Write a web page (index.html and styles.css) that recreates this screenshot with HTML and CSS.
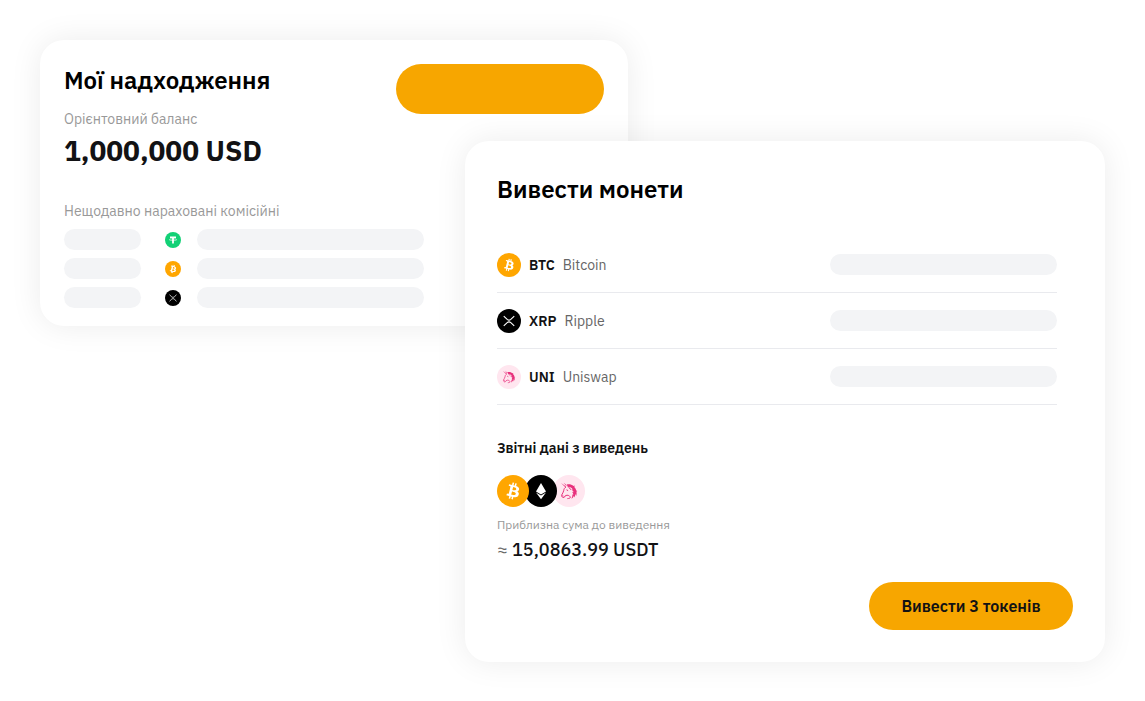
FILE: index.html
```html
<!DOCTYPE html>
<html lang="uk">
<head>
    <meta charset="UTF-8">
    <meta name="viewport" content="width=device-width, initial-scale=1.0">
    <title>Мої надходження</title>
    <link rel="stylesheet" href="styles.css">
</head>
<body>
    <!-- Coin icons -->
    <svg class="sprite" aria-hidden="true">
        <symbol id="btc" viewBox="0 0 32 32">
            <circle cx="16" cy="16" r="16" fill="#ffa600"/>
            <path transform="translate(2.4 2.4) scale(.85)" fill="#fff" d="M23.189 14.02c.314-2.096-1.283-3.223-3.465-3.975l.708-2.84-1.728-.43-.69 2.765c-.454-.114-.92-.22-1.385-.326l.695-2.783L15.596 6l-.708 2.839c-.376-.086-.746-.17-1.104-.26l.002-.009-2.384-.595-.46 1.846s1.283.294 1.256.312c.7.175.826.638.805 1.006l-.806 3.235c.048.012.11.03.18.057l-.183-.045-1.13 4.532c-.086.212-.303.531-.793.41.018.025-1.256-.313-1.256-.313l-.858 1.978 2.25.561c.418.105.828.215 1.231.318l-.715 2.872 1.727.43.708-2.84c.472.127.93.245 1.378.357l-.706 2.828 1.728.43.715-2.866c2.948.558 5.164.333 6.097-2.333.752-2.146-.037-3.385-1.588-4.192 1.13-.26 1.98-1.003 2.207-2.538zm-3.95 5.538c-.533 2.147-4.148.986-5.32.695l.95-3.805c1.172.293 4.929.872 4.37 3.11zm.535-5.569c-.487 1.953-3.495.96-4.47.717l.86-3.45c.975.243 4.118.696 3.61 2.733z"/>
        </symbol>
        <symbol id="xrp" viewBox="0 0 32 32">
            <circle cx="16" cy="16" r="16"/>
            <path fill="none" stroke="#fff" stroke-width="1.5" d="M9 9.500l4.600 4.400q2.400 2 4.800 0L23 9.500M9 22.500l4.600-4.400q2.400-2 4.800 0l4.600 4.400"/>
        </symbol>
        <symbol id="usdt" viewBox="0 0 32 32">
            <circle cx="16" cy="16" r="16" fill="#12d176"/>
            <path fill="#fff" d="M10 9h12v3.400h-4.200V23h-3.600V12.400H10z"/>
            <ellipse cx="16" cy="15.500" rx="7.500" ry="1.600" fill="none" stroke="#fff"/>
        </symbol>
        <symbol id="eth" viewBox="0 0 32 32">
            <circle cx="16" cy="16" r="16"/>
            <path fill="#fff" d="M16 8l5 8.400-5 3-5-3zM11 17.600l5 3 5-3-5 6.600z"/>
        </symbol>
        <symbol id="uni" viewBox="0 0 32 32">
            <circle cx="16" cy="16" r="16" fill="#ffe6ef"/>
            <!-- horn, ear and mane -->
            <path fill="#e8307c" d="M8 8l5 3.400-.7.900zM10.800 7.800l3 2.400-.8.500zM13.800 9.400c2.800-.4 5.200.2 6.700 1.700l1.300-.5-.5 1.300c1.200 1.200 1.700 2.300 1.900 3.700l1.100.3-.9.800c.4 1.600.2 3-.2 4.300l-.8-2.200c0 1.500-.4 2.600-1.200 3.600l-.3-1.700c-.5 1.300-1.300 2.300-2.600 2.900.9-1.500 1.300-2.900 1-4.300l1 .7c0-1.300-.4-2.300-1.200-3.200l1.600.4c-.7-1.300-1.500-2-2.600-2.600l1.700-.1c-1.200-1.500-2.600-2.500-4.500-2.900l-.3.9z"/>
            <!-- face and neck -->
            <path fill="none" stroke="#e8307c" d="M13 12c-1.500.9-2.200 2-2.300 3.800-.3 1.600-1.300 2.600-2 4.200-.3 1.100.2 2 1.300 2.500l1.500-.4.700-1.300 1.800-.6c2 .1 3.100.9 3.300 2.200-.1.900-1.400 1.100-2.900 1.200M13.500 14.800l1.600.8M9.200 20.800l1.200.2M15.400 11.200c.7 1.500 1.200 2.700 2.600 3.400"/>
        </symbol>
    </svg>

    <main class="board">
        <!-- Earnings -->
        <section class="card earnings">
            <div class="earnings-head">
                <div>
                    <h2 class="title">Мої надходження</h2>
                    <p class="label">Орієнтовний баланс</p>
                    <p class="balance">1,000,000 USD</p>
                </div>
                <button class="btn btn-blank" type="button" aria-label="Вивести"></button>
            </div>
            <p class="label">Нещодавно нараховані комісійні</p>
            <ul class="fees">
                <li class="fee">
                    <span class="bar bar-short"></span>
                    <svg class="coin-small"><use href="#usdt"/></svg>
                    <span class="bar"></span>
                </li>
                <li class="fee">
                    <span class="bar bar-short"></span>
                    <svg class="coin-small"><use href="#btc"/></svg>
                    <span class="bar"></span>
                </li>
                <li class="fee">
                    <span class="bar bar-short"></span>
                    <svg class="coin-small"><use href="#xrp"/></svg>
                    <span class="bar"></span>
                </li>
            </ul>
        </section>

        <!-- Withdrawal -->
        <section class="card withdraw">
            <h2 class="title">Вивести монети</h2>
            <ul class="coins">
                <li class="coin">
                    <svg class="coin-icon"><use href="#btc"/></svg>
                    <strong class="ticker">BTC</strong>
                    <span class="name">Bitcoin</span>
                    <span class="bar"></span>
                </li>
                <li class="coin">
                    <svg class="coin-icon"><use href="#xrp"/></svg>
                    <strong class="ticker">XRP</strong>
                    <span class="name">Ripple</span>
                    <span class="bar"></span>
                </li>
                <li class="coin">
                    <svg class="coin-icon"><use href="#uni"/></svg>
                    <strong class="ticker">UNI</strong>
                    <span class="name">Uniswap</span>
                    <span class="bar"></span>
                </li>
            </ul>
            <h3 class="subtitle">Звітні дані з виведень</h3>
            <div class="stack">
                <svg class="coin-large"><use href="#btc"/></svg>
                <svg class="coin-large"><use href="#eth"/></svg>
                <svg class="coin-large"><use href="#uni"/></svg>
            </div>
            <p class="note">Приблизна сума до виведення</p>
            <p class="total"><span class="approx">≈</span> 15,0863.99 USDT</p>
            <button class="btn btn-submit" type="button">Вивести 3 токенів</button>
        </section>
    </main>
</body>
</html>
```
FILE: styles.css
```css
* {
    margin: 0;
    padding: 0;
    box-sizing: border-box;
}

body {
    font-family: 'IBM Plex Sans', 'Noto Sans', sans-serif;
    font-size: 14px;
    line-height: 20px;
    color: #121214;
    background: #fff;
    padding: 40px;
}

ul {
    list-style: none;
}

svg {
    display: block;
    flex: none;
}

.sprite {
    position: absolute;
    width: 0;
    height: 0;
}

/* the second card overlaps the first one */
.board {
    display: grid;
    grid-template-columns: 425fr 163fr 477fr;
    grid-template-rows: 101px auto;
    align-items: start;
}

.card {
    background: #fff;
    border-radius: 24px;
    box-shadow: 0 0 32px rgba(0, 0, 0, 0.08);
}

.earnings {
    grid-column: 1 / 3;
    grid-row: 1 / 3;
    padding: 24px 24px 18px;
}

.withdraw {
    grid-column: 2 / 4;
    grid-row: 2;
    padding: 32px;
    display: flex;
    flex-direction: column;
}

.title {
    font-size: 24px;
    line-height: 32px;
    font-weight: 600;
    color: #000;
}

.earnings-head {
    display: flex;
    justify-content: space-between;
    align-items: flex-start;
    margin-bottom: 28px;
}

.label {
    color: #999;
}

.earnings-head .label {
    margin-top: 13px;
}

.balance {
    font-size: 28px;
    line-height: 44px;
    font-weight: 700;
}

.btn {
    background: #f7a600;
    color: #121214;
    border: none;
    border-radius: 25px;
    font-family: inherit;
    font-size: 16px;
    font-weight: 600;
    cursor: pointer;
}

.btn-blank {
    width: 208px;
    height: 50px;
}

.btn-submit {
    align-self: flex-end;
    width: 204px;
    height: 48px;
    margin-top: 17px;
}

.bar {
    width: 227px;
    height: 21px;
    border-radius: 11px;
    background: #f3f4f6;
}

.bar-short {
    width: 77px;
    margin-right: 8px;
}

.fees {
    display: grid;
    gap: 8px;
    margin-top: 8px;
}

.fee {
    display: flex;
    align-items: center;
    gap: 16px;
}

.coin-small {
    width: 16px;
    height: 16px;
}

.coins {
    margin: 32px 16px 33px 0;
}

.coin {
    display: flex;
    align-items: center;
    gap: 8px;
    height: 56px;
    border-bottom: 1px solid #e9eaee;
}

.coin .bar {
    margin-left: auto;
}

.coin-icon {
    width: 24px;
    height: 24px;
}

.ticker {
    font-weight: 600;
}

.name {
    color: #666;
}

.subtitle {
    font-size: 14px;
    font-weight: 600;
}

.stack {
    display: flex;
    margin: 17px 0 8px;
}

/* earlier coins lie over later ones */
.coin-large {
    width: 32px;
    height: 32px;
    margin-right: -4px;
    position: relative;
}

.coin-large:nth-child(1) {
    z-index: 2;
}

.coin-large:nth-child(2) {
    z-index: 1;
}

.note {
    font-size: 12px;
    color: #999;
}

.total {
    font-size: 18px;
    line-height: 30px;
    font-weight: 500;
}

.approx {
    font-weight: 400;
    color: #666;
}

@media (max-width: 900px) {
    .board {
        grid-template-columns: 1fr;
        grid-template-rows: auto;
        gap: 24px;
    }

    .earnings,
    .withdraw {
        grid-column: 1;
        grid-row: auto;
    }
}
```
